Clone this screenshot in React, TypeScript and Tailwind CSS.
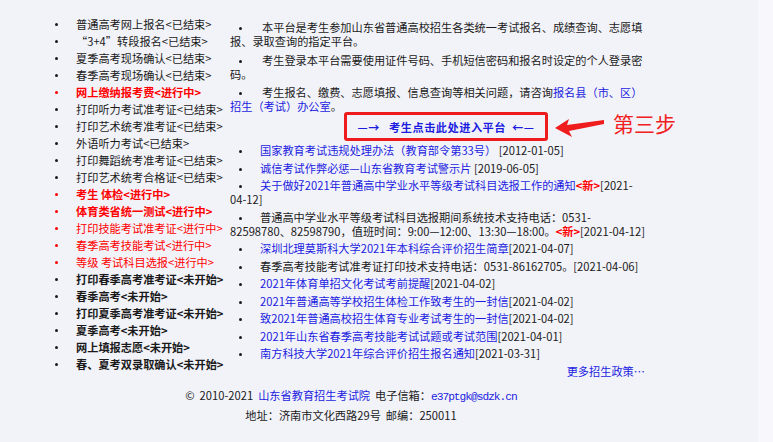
import React from "react";

type Kind = "n" | "rb" | "r" | "b";

const left: [string, Kind][] = [
  ["普通高考网上报名<已结束>", "n"],
  ["“3+4”转段报名<已结束>", "n"],
  ["夏季高考现场确认<已结束>", "n"],
  ["春季高考现场确认<已结束>", "n"],
  ["网上缴纳报考费<进行中>", "rb"],
  ["打印听力考试准考证<已结束>", "n"],
  ["打印艺术统考准考证<已结束>", "n"],
  ["外语听力考试<已结束>", "n"],
  ["打印舞蹈统考准考证<已结束>", "n"],
  ["打印艺术统考合格证<已结束>", "n"],
  ["考生 体检<进行中>", "rb"],
  ["体育类省统一测试<进行中>", "rb"],
  ["打印技能考试准考证<进行中>", "r"],
  ["春季高考技能考试<进行中>", "r"],
  ["等级 考试科目选报<进行中>", "r"],
  ["打印春季高考准考证<未开始>", "b"],
  ["春季高考<未开始>", "b"],
  ["打印夏季高考准考证<未开始>", "b"],
  ["夏季高考<未开始>", "b"],
  ["网上填报志愿<未开始>", "b"],
  ["春、夏考双录取确认<未开始>", "b"],
];

const kindClass: Record<Kind, string> = {
  n: "text-[#1a1a1a]",
  rb: "text-[#ff0000] font-bold",
  r: "text-[#ff0000]",
  b: "text-[#1a1a1a] font-bold",
};

function Dot() {
  return <span className="inline-block w-[3px] h-[3px] rounded-full bg-[#1a1a1a] align-middle" />;
}

function Bullet({ w }: { w: string }) {
  return (
    <span className={`inline-block ${w} pl-[9px]`}>
      <Dot />
    </span>
  );
}

const Link = ({ children }: { children: React.ReactNode }) => (
  <span className="text-[#1c1ce0]">{children}</span>
);
const New = () => <span className="text-[#ff0000] font-bold">&lt;新&gt;</span>;

export default function App() {
  return (
    <div className="relative w-[773px] h-[442px] overflow-hidden flex bg-[#f2f3f9] font-['Noto_Sans_CJK_SC',sans-serif] text-[11.2px] text-[#1a1a1a]">
      <div className="w-[758px] flex flex-col">
        <div className="flex pt-[16px]">
          <ul className="w-[230px]">
            {left.map(([t, k], i) => (
              <li key={i} className={`flex items-center h-[17px] leading-[17px] whitespace-nowrap ${kindClass[k]}`}>
                <span
                  className={`ml-[55px] mr-[18px] w-[3px] h-[3px] rounded-full shrink-0 ${
                    k === "rb" || k === "r" ? "bg-[#ff0000]" : "bg-[#1a1a1a]"
                  }`}
                />
                <span>{t}</span>
              </li>
            ))}
          </ul>
          <div className="w-[418px] pt-[4px] leading-[14px]">
            <p className="mb-[4.5px]">
              <Bullet w="w-[32px]" />
              本平台是考生参加山东省普通高校招生各类统一考试报名、成绩查询、志愿填报、录取查询的指定平台。
            </p>
            <p className="mb-[4.5px]">
              <Bullet w="w-[32px]" />
              考生登录本平台需要使用证件号码、手机短信密码和报名时设定的个人登录密码。
            </p>
            <p>
              <Bullet w="w-[32px]" />
              考生报名、缴费、志愿填报、信息查询等相关问题，请咨询
              <Link>报名县（市、区）招生（考试）办公室</Link>。
            </p>
            <div className="flex justify-center pl-[14px] mt-[-1px]">
              <div className="w-[204px] h-[29px] border-[3px] border-[#ee1c1c] rounded-[3px] flex items-center justify-center text-[#1c1ce0] font-bold whitespace-nowrap tracking-[0.5px]">
                —→&nbsp;&nbsp;&nbsp;考生点击此处进入平台&nbsp;&nbsp;←—
              </div>
            </div>
            <ul className="mt-[2px]">
              <li className="mb-[3.5px]">
                <Bullet w="w-[30px]" />
                <Link>国家教育考试违规处理办法（教育部令第33号）</Link> [2012-01-05]
              </li>
              <li className="mb-[3.5px]">
                <Bullet w="w-[30px]" />
                <Link>诚信考试作弊必惩—山东省教育考试警示片</Link> [2019-06-05]
              </li>
              <li className="mb-[3.5px]">
                <Bullet w="w-[30px]" />
                <Link>关于做好2021年普通高中学业水平等级考试科目选报工作的通知</Link>
                <New />
                [2021-<wbr />04-12]
              </li>
              <li className="mb-[3.5px]">
                <Bullet w="w-[30px]" />
                普通高中学业水平等级考试科目选报期间系统技术支持电话：0531-<wbr />82598780、82598790，值班时间：9:00—12:00、13:30—18:00。
                <New />
                [2021-04-12]
              </li>
              <li className="mb-[3.5px]">
                <Bullet w="w-[30px]" />
                <Link>深圳北理莫斯科大学2021年本科综合评价招生简章</Link>[2021-04-07]
              </li>
              <li className="mb-[3.5px]">
                <Bullet w="w-[30px]" />
                春季高考技能考试准考证打印技术支持电话：0531-86162705。[2021-04-06]
              </li>
              <li className="mb-[3.5px]">
                <Bullet w="w-[30px]" />
                <Link>2021年体育单招文化考试考前提醒</Link>[2021-04-02]
              </li>
              <li className="mb-[3.5px]">
                <Bullet w="w-[30px]" />
                <Link>2021年普通高等学校招生体检工作致考生的一封信</Link>[2021-04-02]
              </li>
              <li className="mb-[3.5px]">
                <Bullet w="w-[30px]" />
                <Link>致2021年普通高校招生体育专业考试考生的一封信</Link>[2021-04-02]
              </li>
              <li className="mb-[3.5px]">
                <Bullet w="w-[30px]" />
                <Link>2021年山东省春季高考技能考试试题或考试范围</Link>[2021-04-01]
              </li>
              <li className="mb-[3.5px]">
                <Bullet w="w-[30px]" />
                <Link>南方科技大学2021年综合评价招生报名通知</Link>[2021-03-31]
              </li>
            </ul>
            <div className="mt-[1.5px] text-right pr-[3px] text-[#1c1ce0]">更多招生政策…</div>
          </div>
        </div>
        <div className="w-[702px] mt-[8px] text-center leading-[18px]">
          <div>
            ©&nbsp;&nbsp;2010-2021&nbsp;&nbsp;<Link>山东省教育招生考试院</Link>&nbsp;&nbsp;电子信箱：
            <span className="text-[#1c1ce0] font-['Liberation_Mono',monospace] tracking-[-1px]">e37ptgk@sdzk.cn</span>
          </div>
          <div>地址：济南市文化西路29号&nbsp;&nbsp;邮编：250011</div>
        </div>
      </div>
      <div className="flex-1 bg-[#f8f8fc]" />

      <svg
        className="absolute left-[553px] top-[115px]"
        width="54"
        height="24"
        viewBox="0 0 54 24"
      >
        <polygon
          points="2,13 16,4 14,10 51,5 51,9 16,16 19,22"
          fill="#ee1c1c"
        />
      </svg>
      <div className="absolute left-[613px] top-[108px] leading-[30px] text-[21px] text-[#f02020]">
        第三步
      </div>
    </div>
  );
}
